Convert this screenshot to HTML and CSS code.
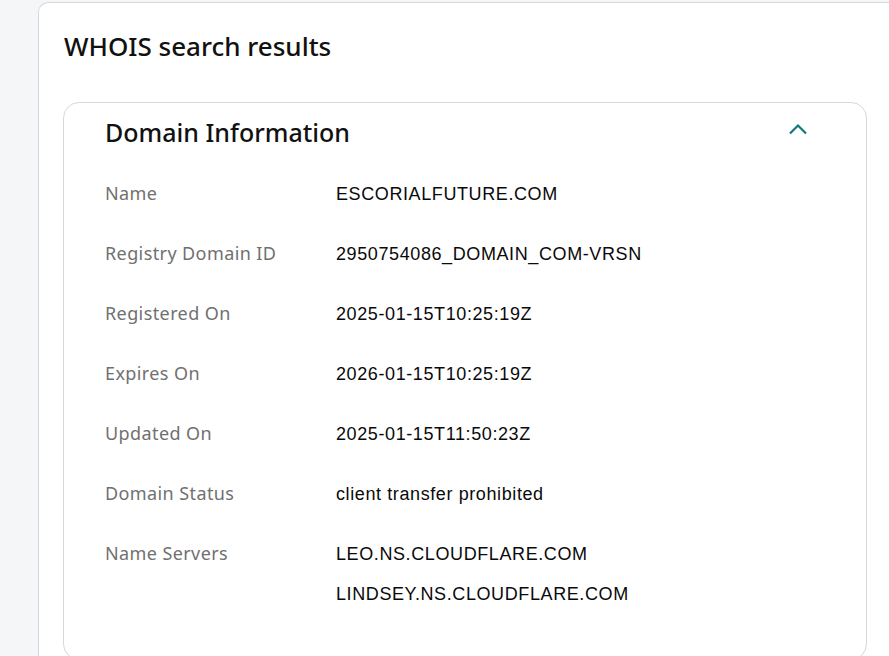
FILE: index.html
```
<!DOCTYPE html>
<html>
<head>
<meta charset="utf-8">
<link rel="stylesheet" href="styles.css">
</head>
<body>
<div class="page">
  <section class="results">
    <h1 class="title">WHOIS search results</h1>
    <div class="panel">
      <div class="panel-head">
        <h2 class="panel-title">Domain Information</h2>
        <svg class="chevron" width="20" height="12" viewBox="0 0 20 12"><polyline points="2,10.5 10,2.5 18,10.5" fill="none" stroke="#11787d" stroke-width="2.2"/></svg>
      </div>
      <div class="rows">
        <div class="row"><div class="label">Name</div><div class="value">ESCORIALFUTURE.COM</div></div>
        <div class="row"><div class="label">Registry Domain ID</div><div class="value">2950754086_DOMAIN_COM-VRSN</div></div>
        <div class="row"><div class="label">Registered On</div><div class="value">2025-01-15T10:25:19Z</div></div>
        <div class="row"><div class="label">Expires On</div><div class="value">2026-01-15T10:25:19Z</div></div>
        <div class="row"><div class="label">Updated On</div><div class="value">2025-01-15T11:50:23Z</div></div>
        <div class="row"><div class="label">Domain Status</div><div class="value">client transfer prohibited</div></div>
        <div class="row"><div class="label">Name Servers</div><div class="value values"><span>LEO.NS.CLOUDFLARE.COM</span><span>LINDSEY.NS.CLOUDFLARE.COM</span></div></div>
      </div>
    </div>
  </section>
</div>
</body>
</html>
```
FILE: styles.css
```
html, body {
  margin: 0;
  padding: 0;
  background: #f5f6f8;
  font-family: "Noto Sans", "Liberation Sans", sans-serif;
  color: #111;
  overflow: hidden;
}
.page {
  height: 656px;
  padding: 2px 0 0 38px;
  box-sizing: border-box;
  overflow: hidden;
}
.results {
  width: 853px;
  box-sizing: border-box;
  background: #fff;
  border: 1px solid #d4d9de;
  border-right: none;
  border-radius: 10px 0 0 0;
  padding: 23px 24px 0 24px;
  height: 700px;
}
.title {
  margin: 0;
  font-size: 26px;
  font-weight: 500;
  line-height: 40px;
  padding-left: 1px;
  color: #111;
}
.panel {
  margin-top: 36px;
  border: 1px solid #d4d9de;
  border-radius: 16px;
  padding: 13px 58px 53px 41px;
}
.panel-head {
  display: flex;
  align-items: center;
  justify-content: space-between;
  height: 32px;
}
.panel-title {
  margin: 0;
  font-size: 25px;
  font-weight: 500;
  line-height: 32px;
}
.chevron {
  display: block;
  margin-top: -7px;
}
.rows {
  display: flex;
  flex-direction: column;
  gap: 36px;
  margin-top: 34px;
}
.row {
  display: grid;
  grid-template-columns: 231px 1fr;
  line-height: 24px;
}
.label {
  color: #707070;
  font-size: 18px;
  letter-spacing: 0.4px;
  margin-top: -1px;
}
.value {
  color: #0a0a0a;
  font-family: "Liberation Sans", Arial, sans-serif;
  font-size: 18px;
  letter-spacing: 0.6px;
}
.values {
  display: flex;
  flex-direction: column;
  gap: 16px;
}
```
